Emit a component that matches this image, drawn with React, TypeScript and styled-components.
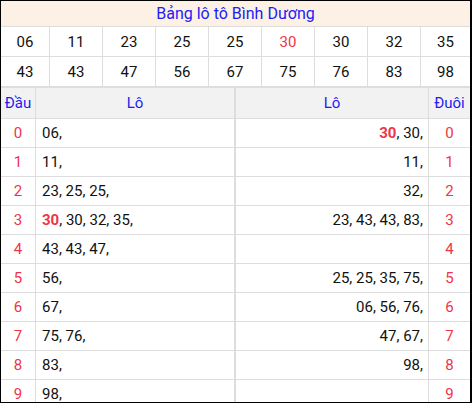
import React from 'react'
import styled, {createGlobalStyle} from 'styled-components'

const GlobalStyle = createGlobalStyle`
  body {
    margin: 0;
    background: #fff;
    font-family: Roboto, "Liberation Sans", sans-serif;
  }
`

const RED = '#ee3547'
const BLUE = '#1c1cf5'
const LINE = '#dddddd'

const Frame = styled.div`
  width: 472px;
  height: 403px;
  box-sizing: border-box;
  border-top: 1px solid #000;
  border-left: 1px solid #000;
  border-right: 2px solid #000;
  border-bottom: 1px solid #000;
  overflow: hidden;
  display: flex;
  flex-direction: column;
`

const Title = styled.div`
  height: 25px;
  line-height: 25px;
  background: #fdf0e5;
  color: ${BLUE};
  font-size: 16px;
  text-align: center;
  border-bottom: 1px solid ${LINE};
`

const NumberGrid = styled.div`
  display: grid;
  grid-template-columns: 48px repeat(7, 52px) 1fr;
  grid-auto-rows: 29px;
  gap: 1px;
  background: ${LINE};
  border-bottom: 2px solid ${LINE};
`

const NumberCell = styled.div<{ $hot?: boolean }>`
  background: #fff;
  display: flex;
  align-items: center;
  justify-content: center;
  font-size: 15px;
  color: ${p => (p.$hot ? RED : '#111')};
`

const LotoGrid = styled.div`
  display: grid;
  grid-template-columns: 34px 198px 193px 1fr;
  grid-template-rows: 30px;
  grid-auto-rows: 28px;
  gap: 1px;
  background: ${LINE};
`

const HeadCell = styled.div<{ $split?: boolean }>`
  background: #f2f2f2;
  color: ${BLUE};
  font-size: 15px;
  display: flex;
  align-items: center;
  justify-content: center;
  ${p => (p.$split ? `border-left: 1px solid ${LINE};` : '')}
`

const DigitCell = styled.div`
  background: #fff;
  color: ${RED};
  font-size: 15px;
  display: flex;
  align-items: center;
  justify-content: center;
`

const ListCell = styled.div<{ $right?: boolean }>`
  background: #fff;
  color: #111;
  font-size: 15px;
  display: flex;
  align-items: center;
  justify-content: ${p => (p.$right ? 'flex-end' : 'flex-start')};
  padding: ${p => (p.$right ? '0 5px 0 0' : '0 0 0 6px')};
  ${p => (p.$right ? `border-left: 1px solid ${LINE};` : '')}
`

const Hot = styled.b`
  color: ${RED};
`

const numbers = ['06', '11', '23', '25', '25', '30', '30', '32', '35', '43', '43', '47', '56', '67', '75', '76', '83', '98']

// first number in a list may be the special one (bold red)
const dau = [
  ['06'], ['11'], ['23', '25', '25'], ['*30', '30', '32', '35'], ['43', '43', '47'],
  ['56'], ['67'], ['75', '76'], ['83'], ['98'],
]
const duoi = [
  ['*30', '30'], ['11'], ['32'], ['23', '43', '43', '83'], [],
  ['25', '25', '35', '75'], ['06', '56', '76'], ['47', '67'], ['98'], [],
]

const renderList = (list: string[]) =>
  list.map((n, i) => (
    <React.Fragment key={i}>
      {n.startsWith('*') ? <Hot>{n.slice(1)}</Hot> : n}
      {', '}
    </React.Fragment>
  ))

export default function App() {
  return <>
    <GlobalStyle/>
    <Frame>
      <Title>Bảng lô tô Bình Dương</Title>
      <NumberGrid>
        {numbers.map((n, i) => (
          <NumberCell key={i} $hot={i === 5}>{n}</NumberCell>
        ))}
      </NumberGrid>
      <LotoGrid>
        <HeadCell>Đầu</HeadCell>
        <HeadCell>Lô</HeadCell>
        <HeadCell $split>Lô</HeadCell>
        <HeadCell>Đuôi</HeadCell>
        {dau.map((list, i) => (
          <React.Fragment key={i}>
            <DigitCell>{i}</DigitCell>
            <ListCell>{renderList(list)}</ListCell>
            <ListCell $right>{renderList(duoi[i])}</ListCell>
            <DigitCell>{i}</DigitCell>
          </React.Fragment>
        ))}
      </LotoGrid>
    </Frame>
  </>
}
